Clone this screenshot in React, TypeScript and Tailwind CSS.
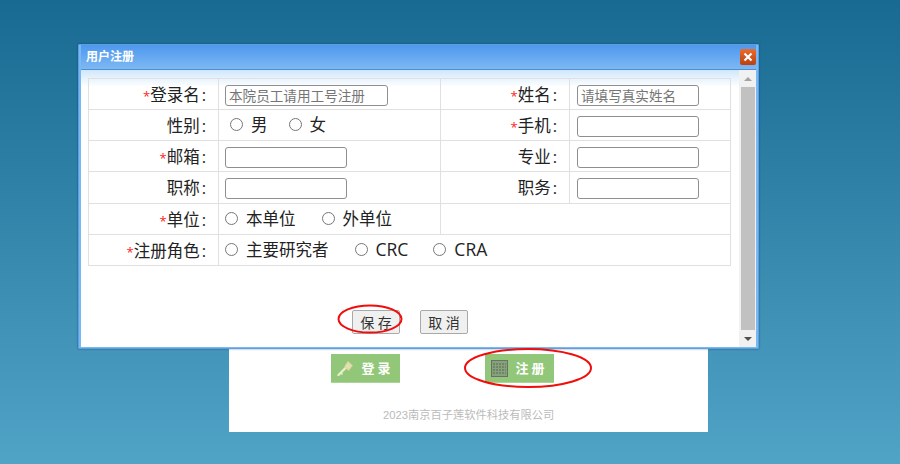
import React from 'react';

const FONT = "font-['Open_Sans','Noto_Sans_CJK_SC',sans-serif]";

const Label = ({ text, required }: { text: string; required?: boolean }) => (
  <td className="border border-[#e0e0e0] pr-[12px] pt-[2px] text-right align-middle text-[16.5px] text-[#222]">
    {required && <span className="text-[13px] text-[#f22]">*</span>}
    {text}
    <span className="ml-[2px]">:</span>
  </td>
);

const Field = ({ placeholder, width = 'w-[122px]' }: { placeholder?: string; width?: string }) => (
  <input
    readOnly
    placeholder={placeholder}
    className={`${width} h-[21px] rounded-[3px] border border-[#8f8f8f] bg-white px-[3px] text-[13.6px] text-[#222] placeholder:text-[#757575]`}
  />
);

const Radio = ({ label, gap, latin }: { label: string; gap: string; latin?: boolean }) => (
  <span className={`inline-flex items-center ${gap}`}>
    <span className="relative top-[-2px] mr-[8px] h-[13px] w-[13px] rounded-full border border-[#767676] bg-white" />
    <span className={`${latin ? 'text-[17.5px]' : 'text-[16.5px]'} relative top-[-1px] leading-none text-[#222]`}>{label}</span>
  </span>
);

const FieldCell = ({ children, colSpan, right }: { children: React.ReactNode; colSpan?: number; right?: boolean }) => (
  <td colSpan={colSpan} className={`border border-[#e0e0e0] ${right ? 'pl-[7px]' : 'pl-[6px]'} pt-[2px] align-middle`}>
    <div className="flex h-full items-center">{children}</div>
  </td>
);

const GreenButton = ({ icon, label }: { icon: React.ReactNode; label: string }) => (
  <div className="flex h-[29px] w-[69px] items-center justify-center gap-[7px] bg-[#92c77a] border-b border-[#a9d596]">
    {icon}
    <span className="relative top-[1px] text-[13px] font-bold tracking-[3px] text-white">{label}</span>
  </div>
);

const KeyIcon = () => (
  <svg width="17" height="17" viewBox="0 0 17 17" fill="none">
    <path d="M1.5 15 8.5 8" stroke="#e8eecb" strokeWidth="2.4" strokeLinecap="round" />
    <path d="M3.5 12.5 5.5 14.5" stroke="#e8eecb" strokeWidth="1.6" />
    <path d="M8 6.5 11 2l4 3.5-3.5 4.5Z" fill="#d9e6b4" stroke="#e8d4a0" strokeWidth="1.2" />
  </svg>
);

const TableIcon = () => (
  <svg width="17" height="17" viewBox="0 0 17 17" fill="none">
    <rect x="0.5" y="0.5" width="16" height="16" fill="#84a378" stroke="#6d6d6d" />
    <path d="M2 4h13M2 7h13M2 10h13M2 13h13" stroke="#5f665b" strokeWidth="1.2" strokeDasharray="2 1" />
  </svg>
);

const App: React.FC = () => {
  return (
    <div className={`relative h-[464px] w-[900px] overflow-hidden bg-gradient-to-b from-[#186a92] to-[#50a4c6] ${FONT}`}>
      {/* page behind the dialog */}
      <div className="ml-[229px] w-[479px] pt-[349px]">
        <div className="h-[83px] bg-white pt-[5px]">
          <div className="flex gap-[85px] pl-[102px]">
            <GreenButton icon={<KeyIcon />} label="登录" />
            <GreenButton icon={<TableIcon />} label="注册" />
          </div>
          <p className="mt-[25px] pl-[154px] text-[11.25px] leading-[14px] text-[#bbbbbb] font-['Liberation_Sans','Noto_Sans_CJK_SC',sans-serif]">
            2023南京百子莲软件科技有限公司
          </p>
        </div>
      </div>

      {/* dialog */}
      <div className="absolute left-[78px] top-[44px] h-[305px] w-[681px] rounded-[1px] border border-[#5f9fe0] bg-[#78b8f5] px-[2px] pb-[2px] shadow-[0_0_2px_rgba(0,40,80,0.6)]">
        <div className="flex h-[24px] items-center justify-between bg-gradient-to-b from-[#4e98ee] to-[#7db8f3] pl-[5px]">
          <span className="text-[12px] font-bold text-white">用户注册</span>
          <div className="flex h-[16px] w-[16px] items-center justify-center rounded-[2px] bg-gradient-to-b from-[#ee6a2c] to-[#b9410f]">
            <svg width="10" height="10" viewBox="0 0 10 10">
              <path d="M1.5 1.5 8.5 8.5M8.5 1.5 1.5 8.5" stroke="#fff" strokeWidth="2.2" />
            </svg>
          </div>
        </div>
        <div className="flex h-[278px] border-t border-[#4f8fd0] bg-white">
          <div className="relative w-[658px] bg-gradient-to-b from-[#cfe7fb] via-white to-white bg-[length:100%_34px] bg-no-repeat pl-[7px] pt-[8px]">
            <table className="w-[642px] table-fixed border-collapse">
              <colgroup>
                <col className="w-[130px]" />
                <col className="w-[222px]" />
                <col className="w-[129px]" />
                <col className="w-[161px]" />
              </colgroup>
              <tbody>
                <tr className="h-[31px]">
                  <Label text="登录名" required />
                  <FieldCell><Field placeholder="本院员工请用工号注册" width="w-[163px]" /></FieldCell>
                  <Label text="姓名" required />
                  <FieldCell right><Field placeholder="请填写真实姓名" /></FieldCell>
                </tr>
                <tr className="h-[31px]">
                  <Label text="性别" />
                  <FieldCell>
                    <span className="pl-[5px]" />
                    <Radio label="男" gap="mr-[21px]" />
                    <Radio label="女" gap="" />
                  </FieldCell>
                  <Label text="手机" required />
                  <FieldCell right><Field /></FieldCell>
                </tr>
                <tr className="h-[31px]">
                  <Label text="邮箱" required />
                  <FieldCell><Field /></FieldCell>
                  <Label text="专业" />
                  <FieldCell right><Field /></FieldCell>
                </tr>
                <tr className="h-[32px]">
                  <Label text="职称" />
                  <FieldCell><Field /></FieldCell>
                  <Label text="职务" />
                  <FieldCell right><Field /></FieldCell>
                </tr>
                <tr className="h-[31px]">
                  <Label text="单位" required />
                  <FieldCell>
                    <Radio label="本单位" gap="mr-[26px]" />
                    <Radio label="外单位" gap="" />
                  </FieldCell>
                  <td colSpan={2} className="border border-[#e0e0e0]" />
                </tr>
                <tr className="h-[31px]">
                  <Label text="注册角色" required />
                  <FieldCell colSpan={3}>
                    <Radio label="主要研究者" gap="mr-[26px]" />
                    <Radio label="CRC" gap="mr-[25px]" latin />
                    <Radio label="CRA" gap="" latin />
                  </FieldCell>
                </tr>
              </tbody>
            </table>
            <div className="mt-[44px] flex gap-[20px] pl-[264px]">
              <button className="h-[24px] w-[48px] rounded-[2px] border border-[#a9a9a9] bg-[#f0f0f0] text-[14px] text-[#333]">保 存</button>
              <button className="h-[24px] w-[48px] rounded-[2px] border border-[#a9a9a9] bg-[#f0f0f0] text-[14px] text-[#333]">取 消</button>
            </div>
            {/* red marker round the save button */}
            <svg className="absolute left-[255px] top-[233px]" width="68" height="32" viewBox="0 0 68 32" fill="none">
              <ellipse cx="34" cy="16" rx="31.5" ry="13.5" stroke="#f20d0d" strokeWidth="2" />
            </svg>
          </div>
          <div className="flex w-[17px] flex-col bg-[#f1f1f1]">
            <div className="flex h-[17px] items-center justify-center">
              <div className="h-0 w-0 border-x-[4px] border-b-[4px] border-x-transparent border-b-[#a3a3a3]" />
            </div>
            <div className="mx-auto w-[14px] flex-1 bg-[#c1c1c1]" />
            <div className="flex h-[17px] items-center justify-center">
              <div className="h-0 w-0 border-x-[4px] border-t-[4px] border-x-transparent border-t-[#505050]" />
            </div>
          </div>
        </div>
      </div>

      {/* red marker round the register button */}
      <svg className="absolute left-[462px] top-[347px]" width="132" height="42" viewBox="0 0 132 42" fill="none">
        <ellipse cx="66" cy="21" rx="63" ry="19" stroke="#f20d0d" strokeWidth="2" />
      </svg>
    </div>
  );
};

export default App;
